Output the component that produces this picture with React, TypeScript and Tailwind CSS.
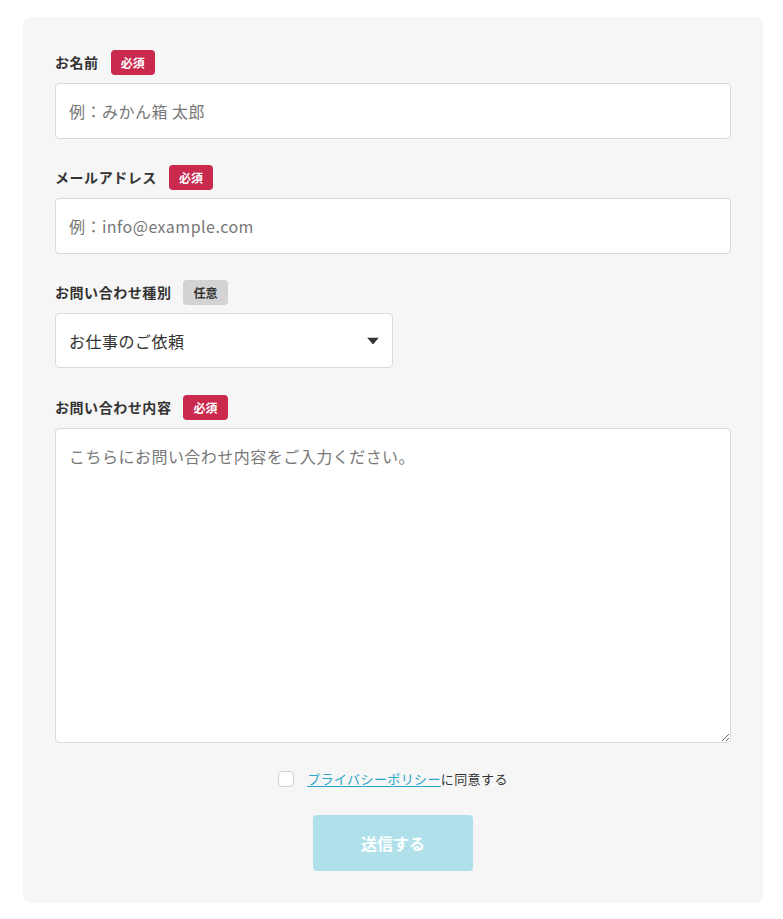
import React, { useState } from "react";

const Badge = ({ required }: { required: boolean }) => (
  <span
    className={`ml-3 inline-flex h-[25px] items-center rounded-[4px] px-[10px] text-[12px] font-bold leading-none ${
      required ? "bg-[#c8294d] text-white" : "bg-[#d3d3d3] text-[#333]"
    }`}
  >
    {required ? "必須" : "任意"}
  </span>
);

const FieldLabel = ({ text, required }: { text: string; required: boolean }) => (
  <div className="mb-2 flex items-center">
    <span className="text-[14px] font-bold tracking-[0.04em] text-[#333]">{text}</span>
    <Badge required={required} />
  </div>
);

const inputBase =
  "w-full rounded-[4px] border border-[#d9d9d9] bg-white px-[13px] text-[16px] tracking-[0.03em] text-[#333] placeholder:text-[#777] outline-none";

export default function App() {
  const [agreed, setAgreed] = useState(false);

  return (
    <div
      className="min-h-screen bg-white px-[23px] pt-[17px] pb-4"
      style={{ fontFamily: '"Noto Sans CJK JP", "Noto Sans", sans-serif' }}
    >
      <form
        className="w-[740px] rounded-[8px] bg-[#f6f6f6] px-8 pt-[33px] pb-8"
        onSubmit={(e) => e.preventDefault()}
      >
        {/* Name */}
        <div className="mb-[26px]">
          <FieldLabel text="お名前" required />
          <input className={`${inputBase} h-[56px]`} placeholder="例：みかん箱 太郎" />
        </div>

        {/* Email */}
        <div className="mb-[26px]">
          <FieldLabel text="メールアドレス" required />
          <input className={`${inputBase} h-[56px]`} placeholder="例：info@example.com" />
        </div>

        {/* Inquiry type */}
        <div className="mb-[27px]">
          <FieldLabel text="お問い合わせ種別" required={false} />
          <div className="relative w-[338px]">
            <select
              className={`${inputBase} h-[55px] appearance-none pr-10`}
              defaultValue="work"
            >
              <option value="work">お仕事のご依頼</option>
              <option value="other">その他</option>
            </select>
            <svg
              className="pointer-events-none absolute right-[14px] top-1/2 -translate-y-1/2"
              width="12"
              height="7"
              viewBox="0 0 12 7"
            >
              <path d="M0 0h12L6 7z" fill="#333" />
            </svg>
          </div>
        </div>

        {/* Message */}
        <div className="mb-[26px]">
          <FieldLabel text="お問い合わせ内容" required />
          <textarea
            className={`${inputBase} block h-[315px] py-[14px] leading-[26px]`}
            placeholder="こちらにお問い合わせ内容をご入力ください。"
          />
        </div>

        {/* Privacy agreement */}
        <label className="flex items-center justify-center text-[13px] tracking-[0.03em] text-[#333]">
          <input
            type="checkbox"
            checked={agreed}
            onChange={(e) => setAgreed(e.target.checked)}
            className="mr-[13px] h-4 w-4 appearance-none rounded-[4px] border border-[#d0d0d0] bg-white"
          />
          <a href="#" className="text-[#2aa5c8] underline underline-offset-2">
            プライバシーポリシー
          </a>
          <span>に同意する</span>
        </label>

        <div className="mt-[26px] flex justify-center">
          <button
            type="submit"
            disabled={!agreed}
            className={`h-[56px] w-[160px] rounded-[4px] text-[16px] font-bold text-white ${
              agreed ? "bg-[#2aa5c8]" : "bg-[#b0e1eb]"
            }`}
          >
            送信する
          </button>
        </div>
      </form>
    </div>
  );
}
